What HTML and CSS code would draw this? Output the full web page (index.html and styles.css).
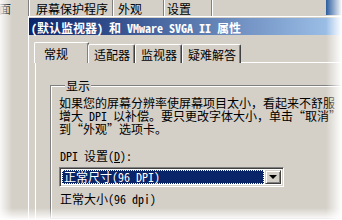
FILE: index.html
```html
<!DOCTYPE html>
<html lang="zh-CN">
<head>
<meta charset="utf-8">
<title>属性</title>
<link rel="stylesheet" href="styles.css">
</head>
<body>
<div class="screen">
  <div class="under-tabs">
    <span class="utab u1">面</span>
    <span class="utab u2">屏幕保护程序</span>
    <span class="utab u3">外观</span>
    <span class="utab u4">设置</span>
    <span class="u-rest"></span>
    <span class="desktop"></span>
  </div>
  <div class="dialog">
    <div class="titlebar">(默认监视器) 和 VMware SVGA II 属性</div>
    <div class="dlg-body">
      <div class="tabs">
        <div class="tab active">常规</div>
        <div class="tab">适配器</div>
        <div class="tab">监视器</div>
        <div class="tab">疑难解答</div>
      </div>
      <div class="panel">
        <fieldset class="group">
          <legend class="legend">显示</legend>
          <div class="desc">
            <div class="line">如果您的屏幕分辨率使屏幕项目太小，看起来不舒服</div>
            <div class="line">增大 DPI 以补偿。要只更改字体大小，单击“取消”</div>
            <div class="line">到“外观”选项卡。</div>
          </div>
          <div class="label">DPI 设置(<u>D</u>):</div>
          <div class="combo">
            <span class="combo-val"><span class="focus">正常尺寸(96 DPI)</span></span>
            <span class="combo-btn"><span class="arrow"></span></span>
          </div>
          <div class="size">正常大小(96 dpi)</div>
        </fieldset>
      </div>
    </div>
  </div>
  <div class="fade fade-left"></div>
  <div class="fade fade-right"></div>
  <div class="fade fade-bottom"></div>
</div>
</body>
</html>
```
FILE: styles.css
```css
* { box-sizing: border-box; }
html, body { margin: 0; padding: 0; }
body {
  width: 342px;
  height: 220px;
  overflow: hidden;
  background: #d4d0c8;
  font-family: "Noto Sans Mono CJK SC", "Noto Sans CJK SC", sans-serif;
  font-size: 12px;
  line-height: 13px;
  color: #000;
}
.screen {
  position: relative;
  width: 342px;
  height: 220px;
  overflow: hidden;
}
.under-tabs {
  display: flex;
  height: 16px;
}
.utab {
  height: 16px;
  padding-top: 2px;
  white-space: nowrap;
  border-right: 1px solid #808080;
}
.u1 { width: 29px; text-indent: -1px; }
.u2 { width: 84px; padding-left: 6px; border-left: 1px solid #fff; }
.u3 { width: 51px; padding-left: 4px; border-left: 1px solid #fff; }
.u4 { width: 48px; padding-left: 2px; border-left: 1px solid #fff; }
.u-rest { flex: 1; border-left: 1px solid #fff; }
.desktop { width: 16px; height: 15px; background: #2a5c9e; }

.dialog {
  margin-left: 28px;
  width: 340px;
  border-top: 1px solid #fff;
  border-left: 1px solid #fff;
  padding-top: 1px;
}
.titlebar {
  height: 17px;
  padding: 3px 0 0 2px;
  background: linear-gradient(to right, #0a246a, #a6caf0 95%);
  color: #fff;
  font-weight: bold;
  white-space: nowrap;
}
.dlg-body { padding-top: 7px; }
.tabs {
  display: flex;
  align-items: flex-end;
  padding-left: 7px;
  height: 21px;
  position: relative;
  z-index: 1;
}
.tab {
  height: 19px;
  padding: 3px 4px 0 5px;
  border-top: 1px solid #fff;
  border-left: 1px solid #fff;
  border-right: 1px solid #404040;
  box-shadow: inset -1px 0 0 #808080;
  border-top-left-radius: 2px;
  border-top-right-radius: 2px;
  background: #d4d0c8;
  white-space: nowrap;
}
.tab.active {
  height: 21px;
  margin: 0 -1px 0 -2px;
  padding: 4px 20px 0 9px;
}
.panel {
  margin-left: 6px;
  margin-top: -1px;
  border-top: 1px solid #fff;
  border-left: 1px solid #fff;
  padding: 16px 0 0 14px;
  height: 200px;
}
.group {
  margin: 0;
  padding: 4px 0 0 8px;
  min-width: 0;
  height: 140px;
  border: 1px solid #808080;
  box-shadow: inset 1px 1px 0 #fff, 1px 1px 0 #fff;
}
.legend {
  padding: 0 1px;
  margin-left: 6px;
  background: #d4d0c8;
  line-height: 13px;
}
.desc { margin: 0; }
.line { white-space: nowrap; height: 13px; }
.label { margin-top: 14px; margin-left: 1px; }
.combo {
  margin-top: 5px;
  width: 225px;
  height: 20px;
  display: flex;
  padding: 1px;
  background: #fff;
  border-top: 1px solid #808080;
  border-left: 1px solid #808080;
  border-right: 1px solid #fff;
  border-bottom: 1px solid #fff;
  box-shadow: inset 1px 1px 0 #404040, inset -1px -1px 0 #d4d0c8;
}
.combo-val {
  flex: 1;
  margin: 1px 0 1px 1px;
  background: #0a246a;
  color: #fff;
  display: flex;
}
.focus {
  flex: 1;
  outline: 1px dotted #fff;
  outline-offset: -1px;
  padding-left: 2px;
  line-height: 14px;
}
.combo-btn {
  width: 16px;
  margin: 1px;
  background: #d4d0c8;
  border-top: 1px solid #d4d0c8;
  border-left: 1px solid #d4d0c8;
  border-right: 1px solid #404040;
  border-bottom: 1px solid #404040;
  box-shadow: inset 1px 1px 0 #fff, inset -1px -1px 0 #808080;
  display: flex;
  align-items: center;
  justify-content: center;
}
.arrow {
  width: 0;
  height: 0;
  border-left: 4px solid transparent;
  border-right: 4px solid transparent;
  border-top: 4px solid #000;
}
.size { margin-top: 5px; margin-left: 1px; }

.fade { position: absolute; pointer-events: none; }
.fade-left {
  left: 0; top: 0; bottom: 0; width: 12px;
  background: linear-gradient(to right, rgba(255,255,255,0.85), rgba(255,255,255,0));
}
.fade-right {
  right: 0; top: 0; bottom: 0; width: 16px;
  background: linear-gradient(to right, rgba(255,255,255,0), #fff);
}
.fade-bottom {
  left: 0; right: 0; bottom: 0; height: 12px;
  background: linear-gradient(to bottom, rgba(255,255,255,0), #fff);
}
```
